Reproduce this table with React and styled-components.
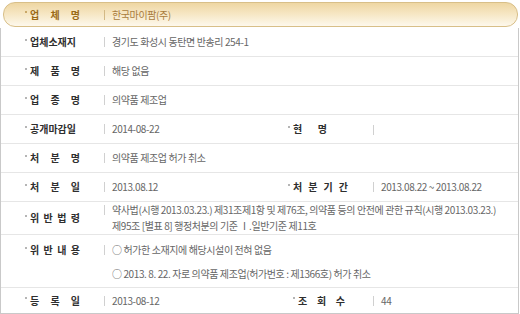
import React from "react";
import styled, { createGlobalStyle } from "styled-components";

const GlobalStyle = createGlobalStyle`
  html, body {
    margin: 0;
    padding: 0;
    background: #ffffff;
  }
  body {
    font-family: "Noto Sans CJK KR", "Noto Sans", sans-serif;
  }
`;

const Wrap = styled.div`
  width: 519px;
`;

const HeaderBar = styled.div`
  display: grid;
  grid-template-columns: 100px 1fr;
  align-items: center;
  height: 23px;
  margin: 2px 1px 1px 3px;
  border: 1px solid #d8bf88;
  border-radius: 12px;
  background: linear-gradient(to bottom, #eed6a2 0%, #f6e6c2 45%, #fdf8ec 100%);
`;

const Table = styled.div`
  border: 1px solid #c9c9c9;
  border-top: none;
`;

const Row = styled.div`
  display: grid;
  grid-template-columns: ${(p) => p.$cols || "103px 1fr"};
  align-items: ${(p) => (p.$top ? "start" : "center")};
  box-sizing: border-box;
  height: ${(p) => p.$h || 29}px;
  padding-top: ${(p) => p.$padTop || 0}px;
  border-bottom: 1px solid #e6e6e6;

  &:last-child {
    border-bottom: none;
  }
`;

const LabelCell = styled.div`
  display: flex;
  align-items: center;
  gap: 3px;
  padding-left: ${(p) => p.$pad ?? 24}px;
  height: 12px;

  &::before {
    content: "";
    flex: none;
    width: 2px;
    height: 2px;
    margin-top: -5px;
    background: ${(p) => (p.$head ? "#c9a868" : "#b5b5b5")};
  }
`;

const LabelText = styled.span`
  display: inline-block;
  width: ${(p) => p.$w || 50}px;
  font-size: 10px;
  font-weight: 700;
  line-height: 12px;
  color: ${(p) => (p.$head ? "#9a6a16" : "#2e2e2e")};
  text-align: justify;
  text-align-last: justify;
  word-break: keep-all;
`;

const ValueCell = styled.div`
  display: flex;
  align-items: flex-start;
  font-size: 10px;
  letter-spacing: -0.4px;
  line-height: ${(p) => p.$lh || 12}px;
  color: ${(p) => (p.$head ? "#a97c3c" : "#666666")};
  white-space: nowrap;

  &::before {
    content: "";
    flex: none;
    width: 1px;
    height: 10px;
    margin: ${(p) => ((p.$lh || 12) - 10) / 2}px 7px 0 0;
    background: ${(p) => (p.$head ? "#d3b985" : "#d0d0d0")};
  }
`;

const Lines = styled.div`
  display: flex;
  flex-direction: column;
  gap: ${(p) => p.$gap || 0}px;
`;

const Field = ({ label, w, pad, children, lh, gap }) => (
  <>
    <LabelCell $pad={pad}>
      <LabelText $w={w}>{label}</LabelText>
    </LabelCell>
    <ValueCell $lh={lh}>
      {Array.isArray(children) ? (
        <Lines $gap={gap}>
          {children.map((line, i) => (
            <div key={i}>{line}</div>
          ))}
        </Lines>
      ) : (
        children
      )}
    </ValueCell>
  </>
);

const PAIR = "103px 160px 109px 1fr";

export default function App() {
  return (
    <Wrap>
      <GlobalStyle />
      <HeaderBar>
        <LabelCell $pad={21} $head>
          <LabelText $head>업 체 명</LabelText>
        </LabelCell>
        <ValueCell $head>한국마이팜(주)</ValueCell>
      </HeaderBar>
      <Table>
        <Row>
          <Field label="업체소재지">경기도 화성시 동탄면 반송리 254-1</Field>
        </Row>
        <Row>
          <Field label="제 품 명">해당 없음</Field>
        </Row>
        <Row>
          <Field label="업 종 명">의약품 제조업</Field>
        </Row>
        <Row $cols={PAIR}>
          <Field label="공개마감일">2014-08-22</Field>
          <Field label="현 명" w={34}>
            {""}
          </Field>
        </Row>
        <Row>
          <Field label="처 분 명">의약품 제조업 허가 취소</Field>
        </Row>
        <Row $cols={PAIR}>
          <Field label="처 분 일">2013.08.12</Field>
          <Field label="처 분 기 간" w={55}>
            2013.08.22 ~ 2013.08.22
          </Field>
        </Row>
        <Row $h={33}>
          <Field label="위 반 법 령" lh={16}>
            {[
              "약사법(시행 2013.03.23.) 제31조제1항 및 제76조, 의약품 등의 안전에 관한 규칙(시행 2013.03.23.)",
              "제95조 [별표 8] 행정처분의 기준 Ⅰ.일반기준 제11호",
            ]}
          </Field>
        </Row>
        <Row $h={53} $top $padTop={9}>
          <Field label="위 반 내 용" gap={12}>
            {[
              "○ 허가한 소재지에 해당시설이 전혀 없음",
              "○ 2013. 8. 22. 자로 의약품 제조업(허가번호 : 제1366호) 허가 취소",
            ]}
          </Field>
        </Row>
        <Row $h={25} $cols="103px 165px 104px 1fr">
          <Field label="등 록 일">2013-08-12</Field>
          <Field label="조 회 수" w={47}>
            44
          </Field>
        </Row>
      </Table>
    </Wrap>
  );
}
